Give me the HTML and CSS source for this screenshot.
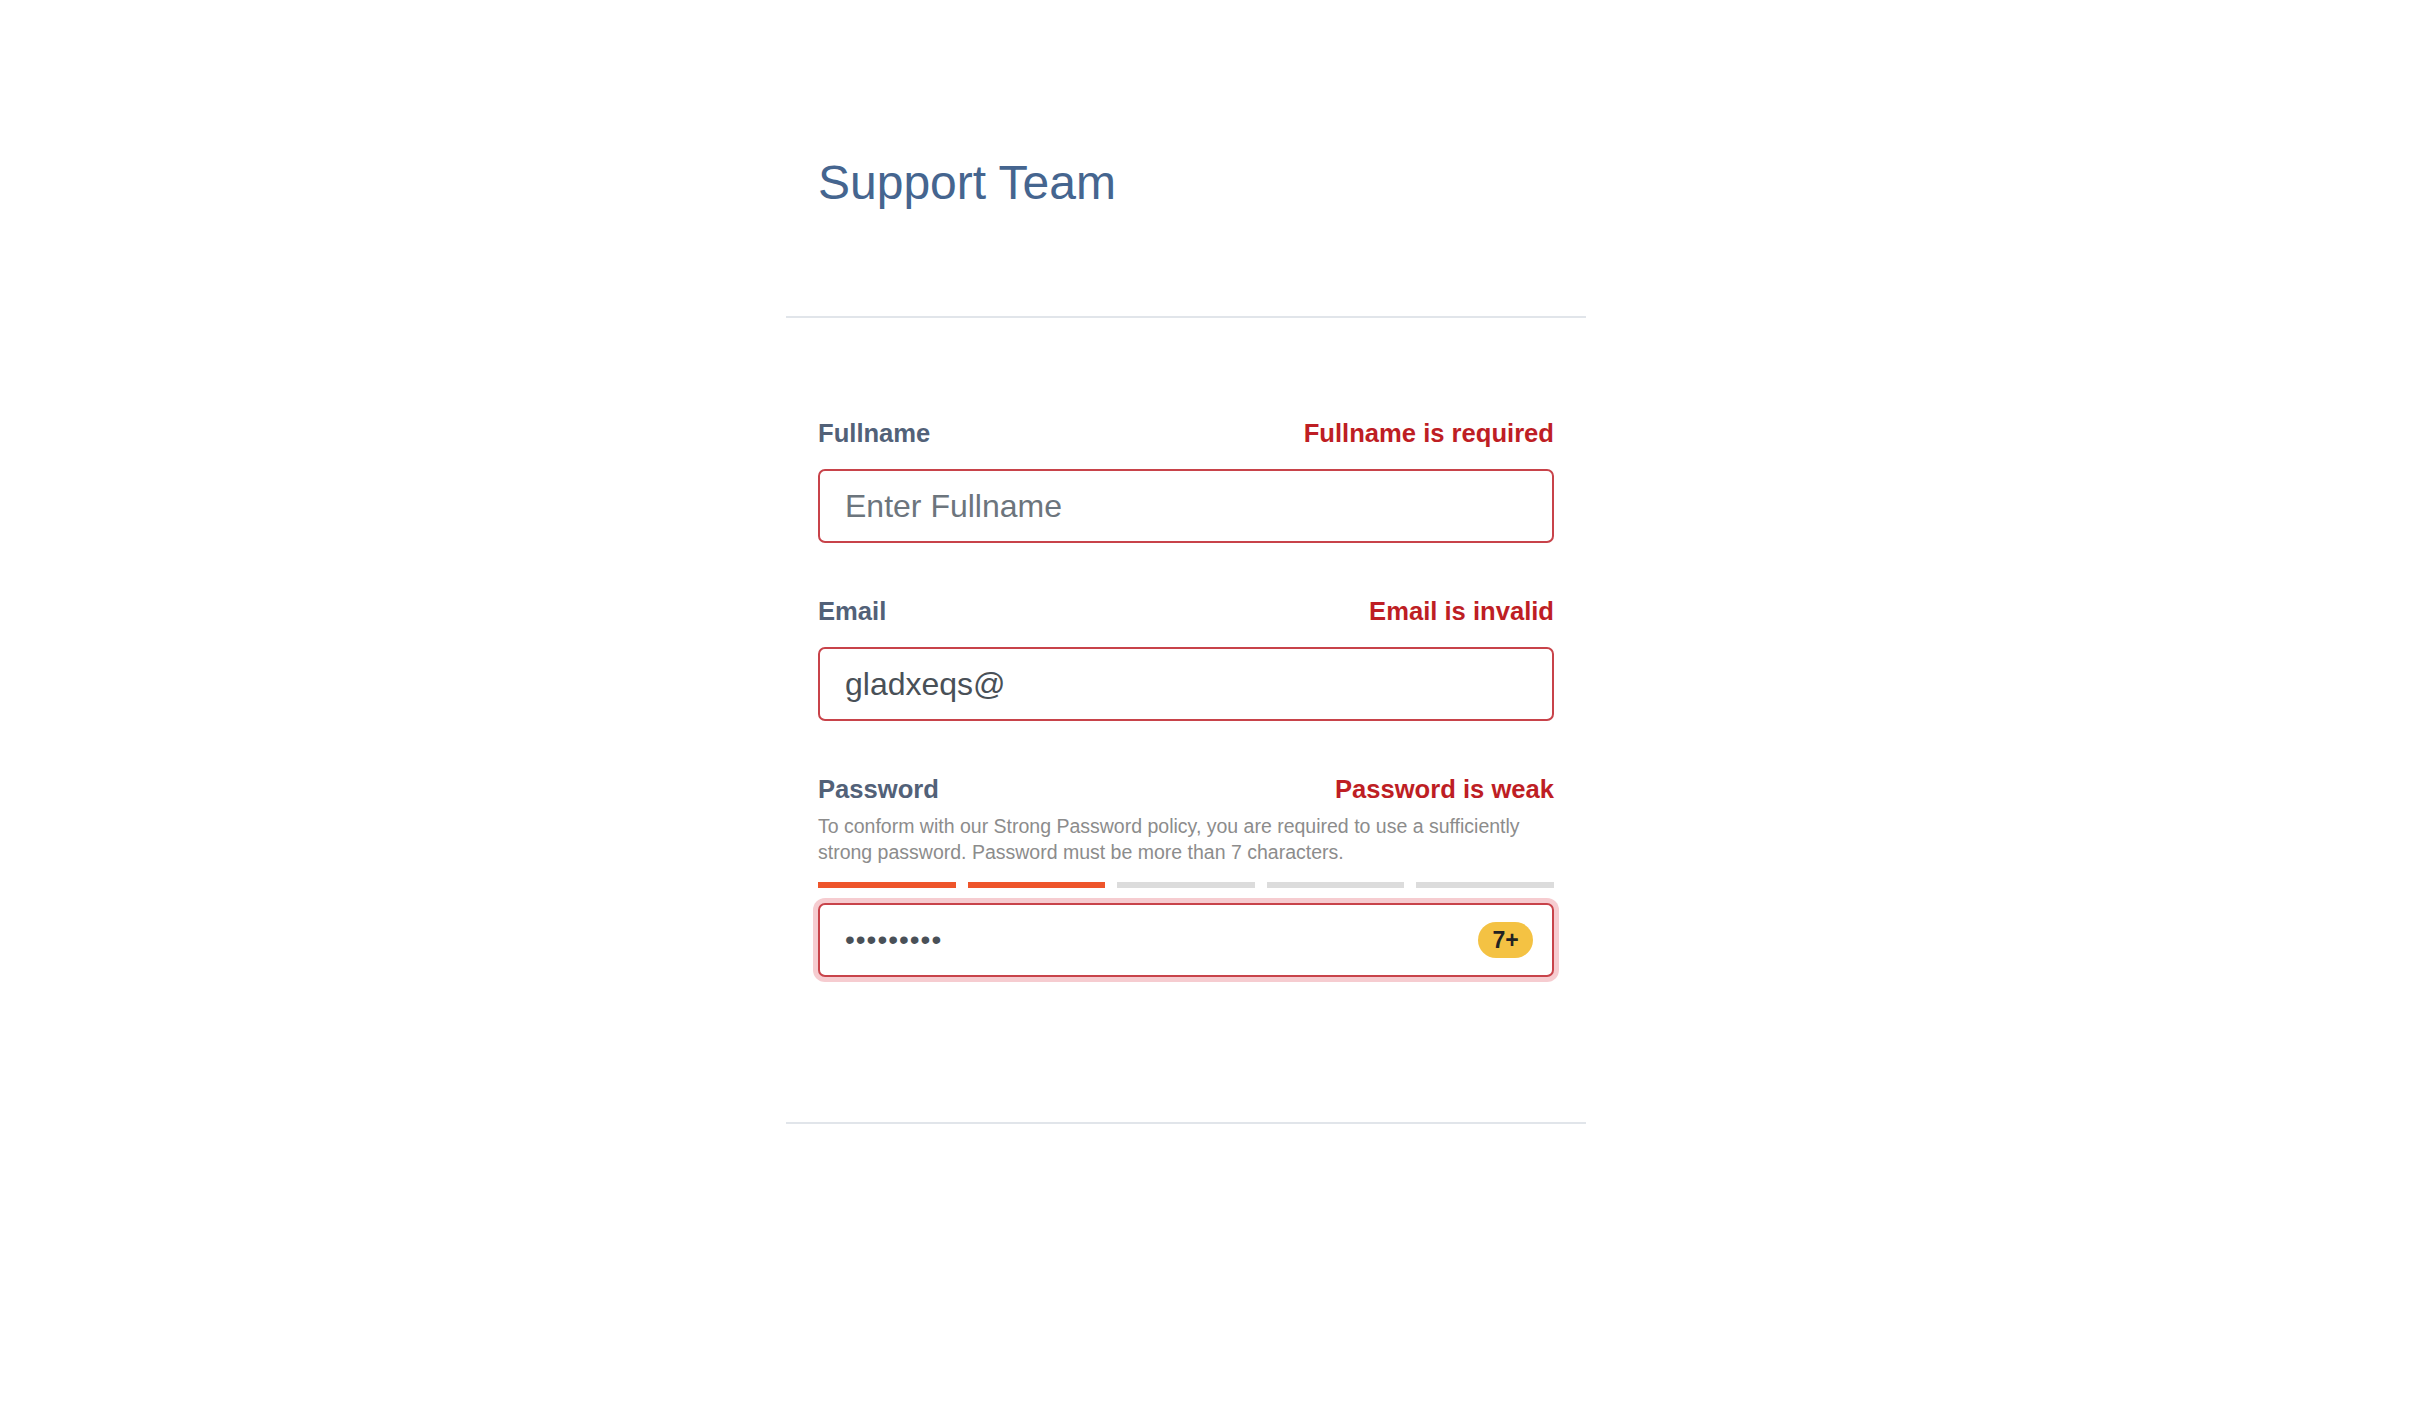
FILE: index.html
```html
<!DOCTYPE html>
<html lang="en">
<head>
<meta charset="utf-8">
<title>Support Team</title>
<link rel="stylesheet" href="styles.css">
</head>
<body>
<div class="card">
  <div class="card-header">
    <h1 class="title">Support Team</h1>
  </div>
  <form class="card-body">
    <div class="field">
      <div class="label-row">
        <label class="label" for="fullname">Fullname</label>
        <span class="error">Fullname is required</span>
      </div>
      <input class="input invalid" id="fullname" type="text" placeholder="Enter Fullname">
    </div>
    <div class="field">
      <div class="label-row">
        <label class="label" for="email">Email</label>
        <span class="error">Email is invalid</span>
      </div>
      <input class="input invalid" id="email" type="text" value="gladxeqs@">
    </div>
    <div class="field">
      <div class="label-row">
        <label class="label" for="password">Password</label>
        <span class="error">Password is weak</span>
      </div>
      <p class="hint">To conform with our Strong Password policy, you are required to use a sufficiently strong password. Password must be more than 7 characters.</p>
      <div class="meter">
        <span class="bar on"></span>
        <span class="bar on"></span>
        <span class="bar"></span>
        <span class="bar"></span>
        <span class="bar"></span>
      </div>
      <div class="pw-wrap">
        <input class="input invalid focused pw" id="password" type="password" value="abcdefghi">
        <span class="badge">7+</span>
      </div>
    </div>
  </form>
</div>
</body>
</html>
```

FILE: styles.css
```css
html, body {
  margin: 0;
  padding: 0;
  background: #ffffff;
}

body {
  font-family: "Liberation Sans", Arial, Helvetica, sans-serif;
}

.card {
  width: 800px;
  margin-left: 786px;
}

.card-header {
  padding: 154px 32px 104px;
  border-bottom: 2px solid #e1e5ea;
}

.title {
  margin: 0;
  font-size: 48px;
  line-height: 58px;
  font-weight: 400;
  color: #45658f;
}

.card-body {
  padding: 100px 32px 145px;
  border-bottom: 2px solid #e1e5ea;
  display: flex;
  flex-direction: column;
  gap: 53px;
}

.field {
  display: flex;
  flex-direction: column;
}

.label-row {
  display: flex;
  justify-content: space-between;
  align-items: baseline;
  font-size: 25.6px;
  line-height: 30px;
  font-weight: 700;
  margin-bottom: 21px;
}

.label {
  color: #526178;
}

.error {
  color: #be1e24;
}

.input {
  box-sizing: border-box;
  width: 100%;
  height: 74px;
  padding: 0 25px;
  margin: 0;
  font-family: "Liberation Sans", Arial, Helvetica, sans-serif;
  font-size: 32px;
  color: #495057;
  background: #fff;
  border: 2px solid #c8434a;
  border-radius: 7px;
  outline: none;
}

.input::placeholder {
  color: #6c757d;
  opacity: 1;
}

.hint {
  margin: -12px 0 17px;
  font-size: 19.5px;
  line-height: 26px;
  color: #8c8c8c;
}

.meter {
  display: flex;
  gap: 12px;
  margin-bottom: 15px;
}

.bar {
  flex: 1;
  height: 6px;
  background: #dcdcdc;
}

.bar.on {
  background: #ee552b;
}

.pw-wrap {
  position: relative;
}

.focused {
  box-shadow: 0 0 0 5px rgba(220, 53, 69, 0.25);
}

.pw {
  font-size: 28px;
  letter-spacing: 1px;
  color: #495057;
}

.badge {
  position: absolute;
  right: 21px;
  top: 19px;
  width: 55px;
  height: 36px;
  border-radius: 18px;
  background: #f4c243;
  color: #222;
  font-size: 23px;
  font-weight: 700;
  line-height: 36px;
  text-align: center;
}
```
